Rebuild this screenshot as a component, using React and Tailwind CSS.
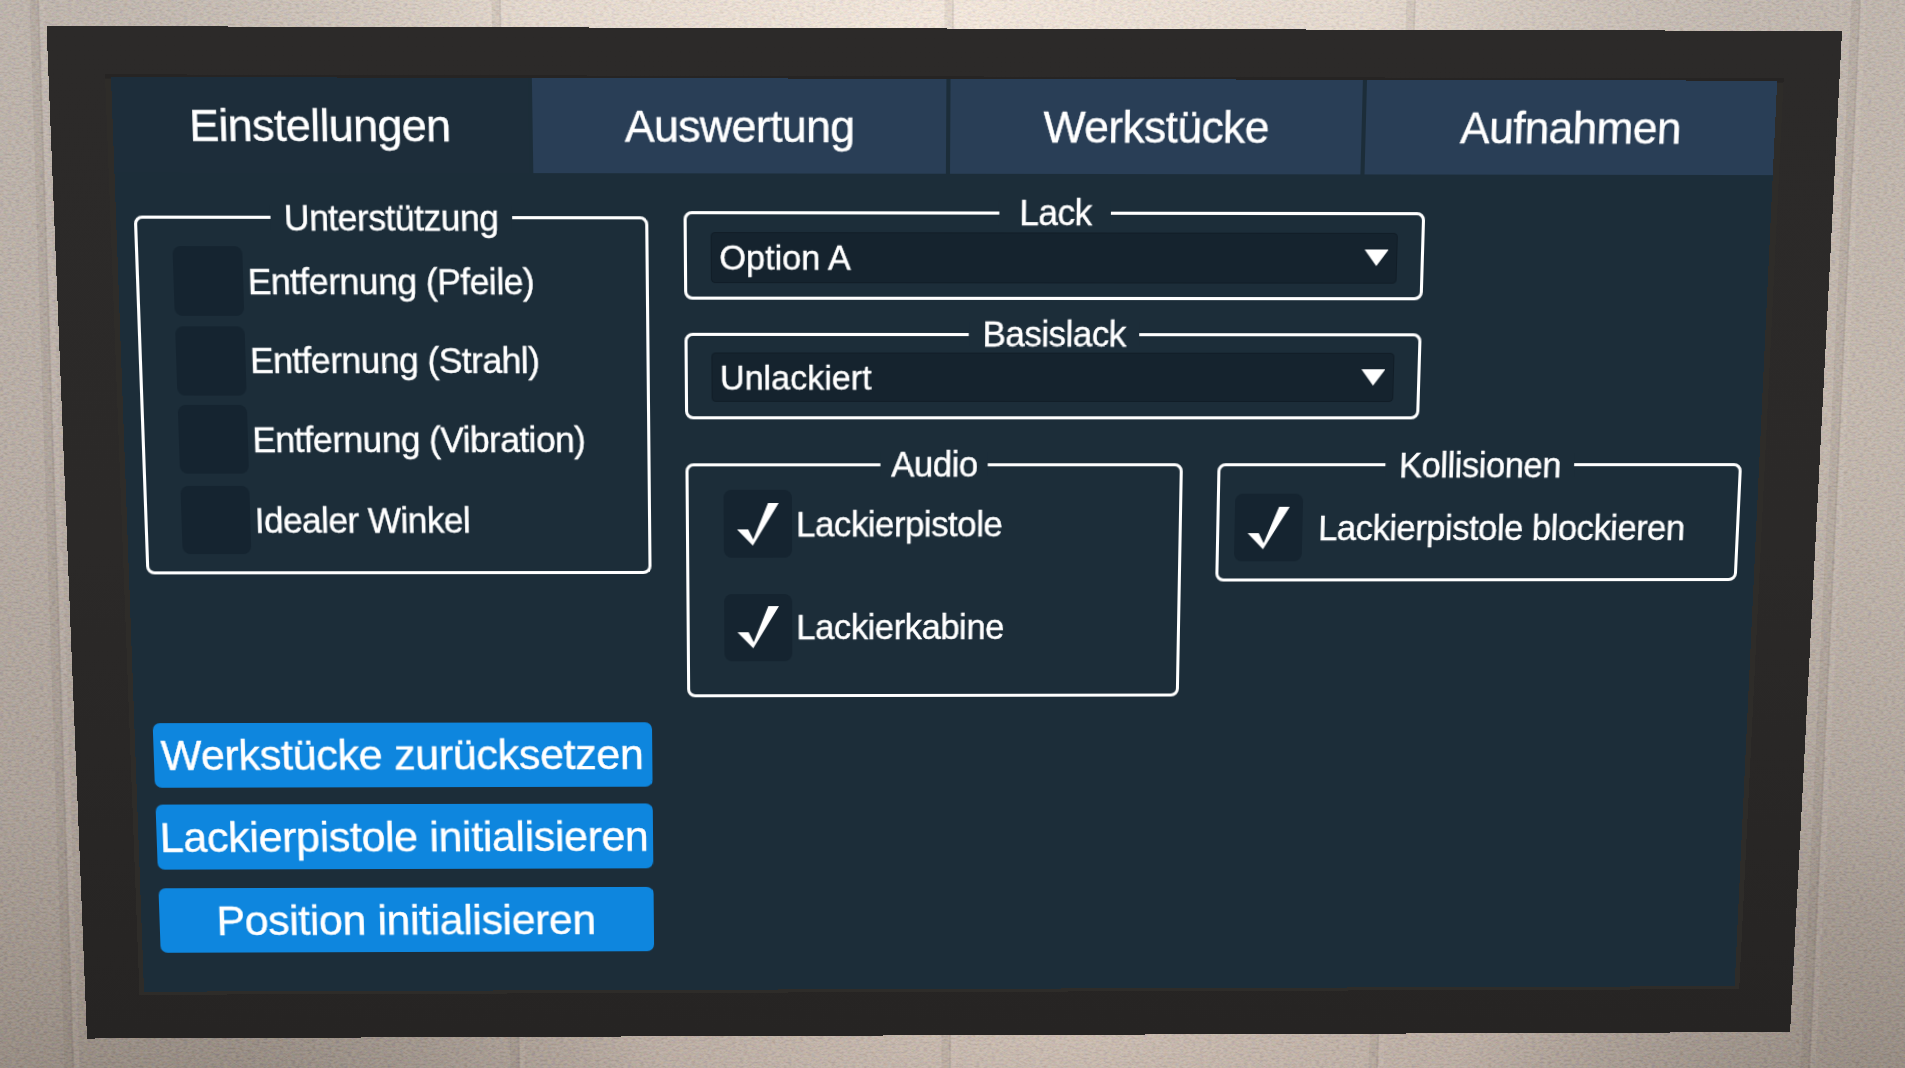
import React from "react";

// Projects a flat w x h box onto four corner points (TL, TR, BR, BL).
function projection(w, h, [[x0, y0], [x1, y1], [x2, y2], [x3, y3]]) {
  const dx1 = x1 - x2, dx2 = x3 - x2, dx3 = x0 - x1 + x2 - x3;
  const dy1 = y1 - y2, dy2 = y3 - y2, dy3 = y0 - y1 + y2 - y3;
  const det = dx1 * dy2 - dx2 * dy1;
  const g = (dx3 * dy2 - dx2 * dy3) / det;
  const k = (dx1 * dy3 - dx3 * dy1) / det;
  const a = x1 - x0 + g * x1, b = x3 - x0 + k * x3;
  const d = y1 - y0 + g * y1, e = y3 - y0 + k * y3;
  return `matrix3d(${[a / w, d / w, 0, g / w, b / h, e / h, 0, k / h, 0, 0, 1, 0, x0, y0, 0, 1].join(",")})`;
}

function Quad({ corners, className, children }) {
  return (
    <div
      className={`col-start-1 row-start-1 h-[900px] w-[1600px] origin-top-left ${className}`}
      style={{ transform: projection(1600, 900, corners) }}
    >
      {children}
    </div>
  );
}

function Wall() {
  const seams = [
    [35, 0, 70, 1068],
    [497, 0, 516, 1068],
    [950, 0, 947, 1068],
    [1412, 0, 1374, 1068],
    [1857, 0, 1806, 1068],
  ];
  return (
    <svg className="col-start-1 row-start-1 h-[1068px] w-[1905px]" viewBox="0 0 1905 1068">
      <defs>
        <linearGradient id="base" x1="0" y1="0" x2="0" y2="1">
          <stop offset="0" stopColor="#bdb3ab" />
          <stop offset="0.4" stopColor="#b7aca4" />
          <stop offset="0.75" stopColor="#a99e96" />
          <stop offset="1" stopColor="#93887f" />
        </linearGradient>
        <radialGradient id="lamp" gradientUnits="userSpaceOnUse" cx="0" cy="0" r="1" gradientTransform="translate(950 20) scale(930 420)">
          <stop offset="0" stopColor="#f5e9de" />
          <stop offset="0.45" stopColor="#ece0d5" stopOpacity="0.85" />
          <stop offset="1" stopColor="#c6bcb3" stopOpacity="0" />
        </radialGradient>
        <radialGradient id="side" gradientUnits="userSpaceOnUse" cx="0" cy="0" r="1" gradientTransform="translate(1860 400) scale(200 500)">
          <stop offset="0" stopColor="#cabeb3" stopOpacity="0.6" />
          <stop offset="1" stopColor="#cabeb3" stopOpacity="0" />
        </radialGradient>
        <radialGradient id="floor" gradientUnits="userSpaceOnUse" cx="0" cy="0" r="1" gradientTransform="translate(1060 1030) scale(820 260)">
          <stop offset="0" stopColor="#cbbcb1" />
          <stop offset="0.5" stopColor="#c3b4aa" stopOpacity="0.8" />
          <stop offset="1" stopColor="#a2978f" stopOpacity="0" />
        </radialGradient>
        <filter id="grain" x="0" y="0" width="100%" height="100%" colorInterpolationFilters="sRGB">
          <feTurbulence type="fractalNoise" baseFrequency="0.25 0.5" numOctaves="3" seed="4" />
          <feColorMatrix values="1.6 0.8 0.2 0 -0.56  0.8 1.6 0.2 0 -0.58  0.5 0.8 1.3 0 -0.62  0 0 0 0 0.095" />
        </filter>
      </defs>
      <rect width="1905" height="1068" fill="url(#base)" />
      <rect width="1905" height="1068" fill="url(#lamp)" />
      <rect width="1905" height="1068" fill="url(#side)" />
      <rect width="1905" height="1068" fill="url(#floor)" />
      {seams.map(([x1, y1, x2, y2]) => (
        <g key={x1}>
          <line x1={x1 - 1} y1={y1} x2={x2 - 1} y2={y2} stroke="#5c5048" strokeOpacity="0.1" strokeWidth="9" />
          <line x1={x1 + 3} y1={y1} x2={x2 + 3} y2={y2} stroke="#4c423b" strokeOpacity="0.08" strokeWidth="2" />
          <line x1={x1 + 7} y1={y1} x2={x2 + 7} y2={y2} stroke="#fff4ea" strokeOpacity="0.07" strokeWidth="5" />
        </g>
      ))}
      <rect width="1905" height="1068" filter="url(#grain)" />
    </svg>
  );
}

function Tab({ active, children }) {
  return (
    <div className={`flex items-center justify-center pt-[0.8px] text-[43px] leading-none tracking-[-0.65px] ${active ? "bg-[#1d2d3a] pr-[2px]" : "bg-[#293e56]"}`}>
      <span>{children}</span>
    </div>
  );
}

function Group({ title, className, gap = "px-[13px]", drop = "top-[-1.5px]", children }) {
  return (
    <section className={`relative rounded-[8px] border-[3px] border-white ${className}`}>
      <h2 className={`absolute left-1/2 -translate-x-1/2 -translate-y-1/2 whitespace-nowrap bg-[#1c2d39] text-[34.2px] leading-[24px] tracking-[-0.52px] ${gap} ${drop}`}>
        {title}
      </h2>
      {children}
    </section>
  );
}

function Check({ checked, gap = "gap-[4.3px]", children }) {
  return (
    <label className={`flex h-[67px] items-center whitespace-nowrap text-[34.3px] leading-none tracking-[-0.52px] ${gap}`}>
      <span className="flex h-[67px] w-[66.5px] shrink-0 items-center justify-center rounded-[8px] bg-[#152430]">
        {checked && (
          <svg className="h-[42px] w-[41px]" viewBox="0 0 41 42" fill="#fff">
            <path d="M0 26H11L16 36L30.5 0H41L15.5 42Z" />
          </svg>
        )}
      </span>
      <span className="pt-[0.4px]">{children}</span>
    </label>
  );
}

function Dropdown({ value }) {
  return (
    <div className="flex h-[48.6px] w-[666px] items-center justify-between rounded-[4px] border border-[#111d27] bg-[#15232e] pl-[7.5px] pr-[7.5px] text-[33.2px] leading-none">
      <span className="pt-[1.2px]">{value}</span>
      <svg className="h-[16px] w-[23.6px]" viewBox="0 0 24 16" preserveAspectRatio="none" fill="#fff">
        <path d="M0 0H24L12 16Z" />
      </svg>
    </div>
  );
}

function Button({ className = "", children }) {
  return (
    <button className={`flex h-[65.6px] w-[491.6px] items-center justify-center whitespace-nowrap rounded-[7px] bg-[#0e86de] pr-[1.4px] text-[42.6px] leading-none tracking-[-0.36px] ${className}`}>
      <span>{children}</span>
    </button>
  );
}

export default function App() {
  return (
    <main className="grid h-[1068px] w-[1905px] overflow-hidden bg-[#b9aea5] font-['Liberation_Sans',Arial,sans-serif] text-white">
      <Wall />
      <Quad
        corners={[[46.5, 26], [1842, 31], [1790, 1032], [87, 1038.5]]}
        className="bg-linear-to-b from-[#2c2a29] via-[#2b2928] to-[#262423]"
      />
      <Quad
        corners={[[105, 74.3], [1783.5, 78.5], [1739, 989], [139.5, 994.8]]}
        className="border-t-[4px] border-t-[#262423] bg-[#2e2c29]"
      />
      <Quad
        corners={[[111, 77], [1777, 80.7], [1734.4, 986], [144, 991.7]]}
        className="flex flex-col bg-[#1c2d39] [-webkit-text-stroke:0.4px_#fff]"
      >
        <nav className="grid h-[89.8px] grid-cols-[397px_397px_397px_1fr] gap-[4px]">
          <Tab active>Einstellungen</Tab>
          <Tab>Auswertung</Tab>
          <Tab>Werkstücke</Tab>
          <Tab>Aufnahmen</Tab>
        </nav>
        <div className="flex">
          <div className="ml-[16.5px] w-[494.5px] shrink-0 pt-[41.2px]">
            <Group title="Unterstützung" drop="top-[-0.5px]" className="h-[347.8px] pl-[33.9px] pt-[26.2px]">
              <div className="flex flex-col gap-[9.6px]">
                <Check>Entfernung (Pfeile)</Check>
                <Check>Entfernung (Strahl)</Check>
                <Check>Entfernung (Vibration)</Check>
                <div className="pt-[2.5px]">
                  <Check>Idealer Winkel</Check>
                </div>
              </div>
            </Group>
            <div className="ml-[1.6px] mt-[148px]">
              <Button>Werkstücke zurücksetzen</Button>
              <Button className="mt-[17px]">Lackierpistole initialisieren</Button>
              <Button className="mt-[19.5px]">Position initialisieren</Button>
            </div>
          </div>
          <div className="ml-[34.3px] shrink-0 pt-[36px]">
            <Group title="Lack" gap="px-[19px]" className="h-[85px] w-[718px] pl-[22.4px] pt-[17.4px]">
              <Dropdown value="Option A" />
            </Group>
            <Group title="Basislack" className="mt-[32px] h-[83.8px] w-[718px] pl-[22.4px] pt-[16px]">
              <Dropdown value="Unlackiert" />
            </Group>
            <div className="mt-[43.2px] flex items-start gap-[34px]">
              <Group title="Audio" gap="px-[10px]" className="h-[231.8px] w-[486.3px] pl-[33.8px] pt-[23.6px]">
                <div className="flex flex-col gap-[35.5px]">
                  <Check checked>Lackierpistole</Check>
                  <Check checked>Lackierkabine</Check>
                </div>
              </Group>
              <Group title="Kollisionen" drop="top-[-0.5px]" className="h-[117.5px] w-[517.5px] pl-[15.5px] pt-[27.4px]">
                <Check checked gap="gap-[15.8px]">Lackierpistole blockieren</Check>
              </Group>
            </div>
          </div>
        </div>
      </Quad>
    </main>
  );
}
